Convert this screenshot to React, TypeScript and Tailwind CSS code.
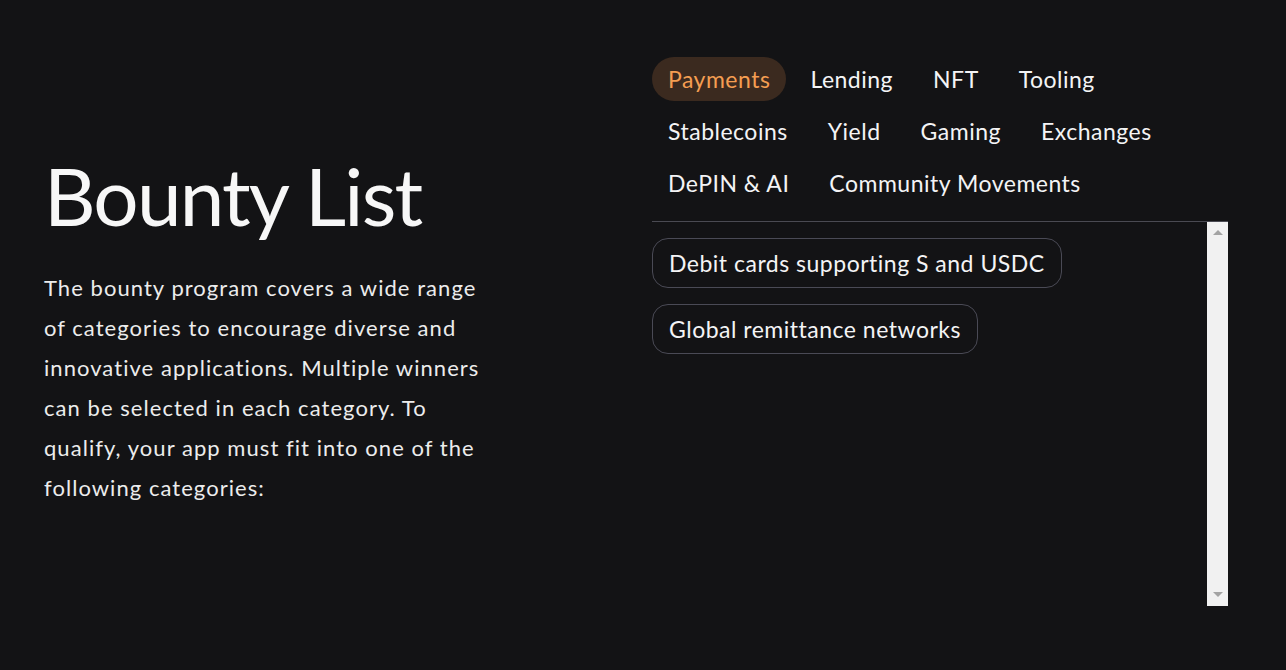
import React from "react";

const tabs = [
  "Payments",
  "Lending",
  "NFT",
  "Tooling",
  "Stablecoins",
  "Yield",
  "Gaming",
  "Exchanges",
  "DePIN & AI",
  "Community Movements",
];

const items = ["Debit cards supporting S and USDC", "Global remittance networks"];

export default function App() {
  return (
    <div
      className="w-full h-[670px] bg-[#131315] text-[#f4f4f5] flex items-stretch overflow-hidden"
      style={{ fontFamily: "Lato, 'Noto Sans', sans-serif" }}
    >
      <div className="w-[652px] pl-[44px] flex flex-col justify-center pb-[8px]">
        <h1 className="text-[80px] leading-[1] font-normal tracking-[-1.8px] text-[#f7f7f7]">Bounty List</h1>
        <p className="mt-[33px] w-[460px] text-[22px] leading-[40px] tracking-[1.05px] text-[#ececec]">
          The bounty program covers a wide range of categories to encourage diverse and innovative
          applications. Multiple winners can be selected in each category. To qualify, your app must
          fit into one of the following categories:
        </p>
      </div>
      <div className="w-[576px] pt-[57px] pb-[64px] flex flex-col">
        <div className="flex flex-wrap gap-x-[8px] gap-y-[8px] pb-[16px] border-b border-[#4a4a52]">
          {tabs.map((t, i) => (
            <button
              key={t}
              className={
                i === 0
                  ? "h-[44px] px-[16px] rounded-full bg-[#3b2a1f] text-[#f59e52] text-[23px] tracking-[0.5px]"
                  : "h-[44px] px-[16px] rounded-full text-[#f4f4f5] text-[23px] tracking-[0.5px]"
              }
            >
              {t}
            </button>
          ))}
        </div>
        <div className="flex-1 flex min-h-0">
          <div className="flex-1 pt-[16px] flex flex-col items-start gap-[16px]">
            {items.map((it) => (
              <div
                key={it}
                className="h-[50px] px-[16px] flex items-center rounded-[16px] border border-[#4a4a55] text-[23px] tracking-[0.5px] text-[#f4f4f5]"
              >
                {it}
              </div>
            ))}
          </div>
          <div className="w-[21px] bg-[#f1f1f1] flex flex-col items-center justify-between pt-[8px] pb-[9px]">
            <div className="w-0 h-0 border-l-[5px] border-r-[5px] border-b-[5px] border-l-transparent border-r-transparent border-b-[#a3a3a3]" />
            <div className="w-0 h-0 border-l-[5px] border-r-[5px] border-t-[5px] border-l-transparent border-r-transparent border-t-[#a3a3a3]" />
          </div>
        </div>
      </div>
    </div>
  );
}
